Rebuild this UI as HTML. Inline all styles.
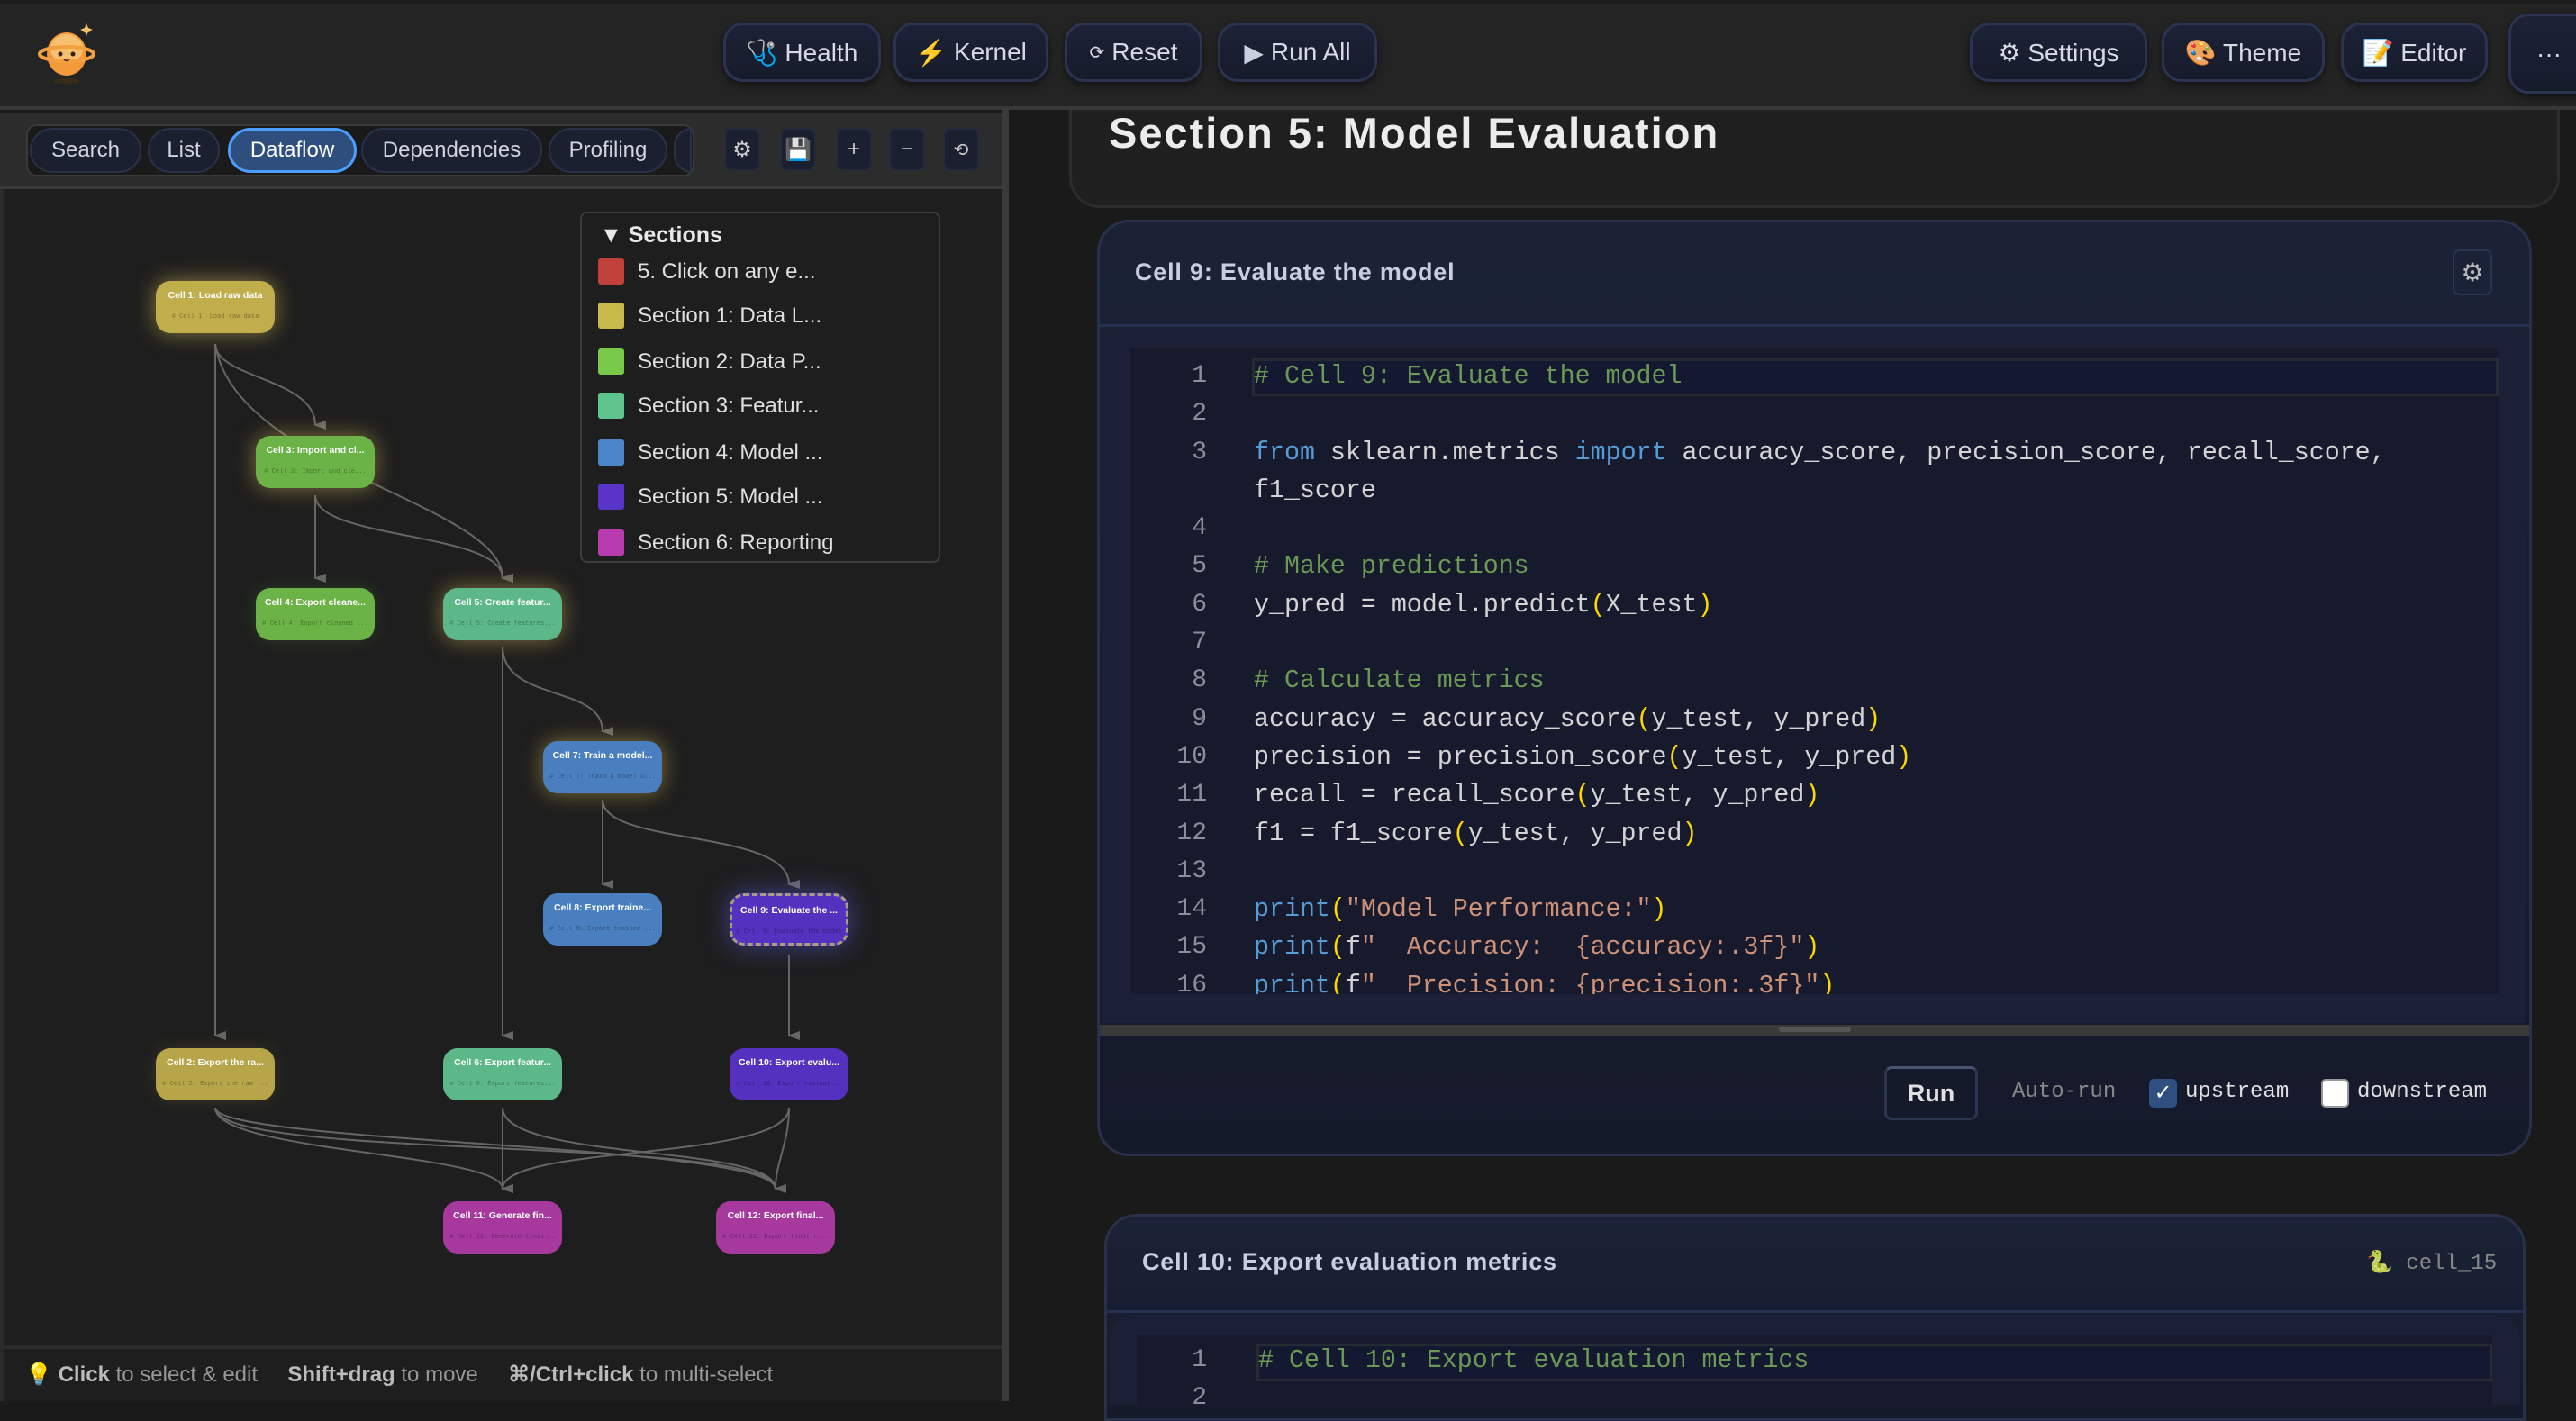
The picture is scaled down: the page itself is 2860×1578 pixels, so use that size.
<!DOCTYPE html>
<html><head><meta charset="utf-8"><style>
*{box-sizing:border-box;margin:0;padding:0}
body{width:2860px;height:1556px;overflow:hidden;background:#1a1a1a;font-family:"Liberation Sans",sans-serif;position:relative;color:#ddd}
.a{position:absolute}
.tb{position:absolute;top:25px;height:66px;background:linear-gradient(#1c2236,#161b2c);border:3px solid #2a3350;border-radius:22px;color:#d6dae6;font-size:28px;display:flex;align-items:center;justify-content:center;gap:8px;box-shadow:0 4px 10px rgba(0,0,0,.5)}
.tab{position:absolute;top:142px;height:50px;background:#1b2030;border:2px solid #2a3248;border-radius:25px;color:#d0d4de;font-size:24px;display:flex;align-items:center;justify-content:center}
.ib{position:absolute;top:142px;width:40px;height:48px;background:#1b2030;border:2px solid #232a3c;border-radius:8px;color:#ccc;font-size:24px;display:flex;align-items:center;justify-content:center}
.leg{position:absolute;left:664px;width:29px;height:29px;border-radius:3px}
.legt{position:absolute;left:708px;font-size:24px;color:#e0e0e0}
.node{position:absolute;width:132px;height:58px;border-radius:16px;text-align:center;color:#fff;font-size:10.5px;font-weight:bold;padding-top:10px}
.node span{display:block;font-family:"Liberation Mono",monospace;font-weight:normal;font-size:7px;color:rgba(0,0,0,.35);margin-top:14px;white-space:nowrap;overflow:hidden}
.code{position:absolute;font-family:"Liberation Mono",monospace;font-size:28.3px;line-height:42.3px;color:#d4d4d4;white-space:pre}
.ln{position:absolute;font-family:"Liberation Mono",monospace;font-size:28px;line-height:42.3px;color:#8a8f9c;text-align:right;width:60px;white-space:pre}
.c{color:#6a9955}.k{color:#569cd6}.p{color:#ffd700}.s{color:#ce9178}
</style></head><body>
<!-- right panel section card (under top bar) -->
<div class="a" style="left:1187px;top:90px;width:1655px;height:141px;background:#1f1f1f;border:3px solid #2c2c2c;border-top:none;border-radius:0 0 34px 34px"></div>
<div class="a" style="left:1231px;top:120px;font-size:47px;font-weight:bold;color:#ececec;letter-spacing:2px">Section 5: Model Evaluation</div>
<!-- top bar -->
<div class="a" style="left:0;top:0;width:2860px;height:122px;background:#242424;border-bottom:4px solid #383838"></div>
<div class="a" style="left:0;top:0;width:2860px;height:4px;background:#1c1c1c"></div>
<svg class="a" style="left:36px;top:18px" width="80" height="80" viewBox="0 0 80 80">
<ellipse cx="38" cy="72" rx="14" ry="3" fill="#3a2a1a"/>
<ellipse cx="38" cy="42" rx="22" ry="24" fill="#f39a3a"/>
<ellipse cx="38" cy="36" rx="18" ry="16" fill="#f7c070"/>
<ellipse cx="38" cy="42" rx="30" ry="8" fill="none" stroke="#f2a040" stroke-width="4"/>
<circle cx="31" cy="42" r="2.5" fill="#3a2010"/><circle cx="45" cy="42" r="2.5" fill="#3a2010"/>
<path d="M35 48 q3 3 6 0" stroke="#3a2010" stroke-width="1.5" fill="none"/>
<path d="M60 8 l2 5 l5 2 l-5 2 l-2 5 l-2 -5 l-5 -2 l5 -2z" fill="#f7c070"/>
</svg>
<div class="tb" style="left:803px;width:175px">🩺 Health</div>
<div class="tb" style="left:992px;width:172px"><span style="color:#f5c542">⚡</span> Kernel</div>
<div class="tb" style="left:1182px;width:153px"><span style="font-size:20px">⟳</span> Reset</div>
<div class="tb" style="left:1352px;width:177px"><span style="color:#c8d0e0">▶</span> Run All</div>
<div class="tb" style="left:2187px;width:197px">⚙ Settings</div>
<div class="tb" style="left:2400px;width:181px">🎨 Theme</div>
<div class="tb" style="left:2599px;width:163px">📝 Editor</div>
<div class="tb" style="left:2785px;top:15px;height:89px;width:90px;border-radius:22px 0 0 22px">···</div>

<!-- left panel -->
<div class="a" style="left:0;top:126px;width:1112px;height:1430px;background:#1e1e1e;border-left:4px solid #2a2a2a"></div>
<div class="a" style="left:0;top:126px;width:1112px;height:84px;background:#2c2c2c;border-bottom:4px solid #3a3a3a"></div>
<div class="a" style="left:1112px;top:122px;width:8px;height:1434px;background:#3a3a3a"></div>
<div class="a" style="left:29px;top:138px;width:742px;height:58px;background:#1a1a1a;border:2px solid #3a3a3a;border-radius:12px"></div>
<div class="tab" style="left:33px;width:124px">Search</div>
<div class="tab" style="left:164px;width:80px">List</div>
<div class="tab" style="left:253px;width:143px;background:#2e4f7e;border:3px solid #4a9eff;color:#fff">Dataflow</div>
<div class="tab" style="left:401px;width:201px">Dependencies</div>
<div class="tab" style="left:609px;width:132px">Profiling</div>
<div class="tab" style="left:748px;width:20px;border-radius:25px 0 0 25px"></div>
<div class="ib" style="left:804px">⚙</div>
<div class="ib" style="left:866px">💾</div>
<div class="ib" style="left:928px">+</div>
<div class="ib" style="left:987px">−</div>
<div class="ib" style="left:1047px;font-size:20px">⟲</div>

<!-- graph edges -->
<svg class="a" style="left:0;top:0" width="1112" height="1556">
<defs><marker id="ar" markerWidth="10" markerHeight="14" refX="5" refY="12" orient="auto-start-reverse" markerUnits="userSpaceOnUse"><path d="M0 0 L10 0 L5 14z" fill="#666"/></marker></defs>
<g stroke="#666" stroke-width="2" fill="none">
<path d="M239 382 C239 420 350 420 350 472" marker-end="url(#ar)"/>
<path d="M239 382 C260 520 558 560 558 642" marker-end="url(#ar)"/>
<path d="M239 382 L239 1150" marker-end="url(#ar)"/>
<path d="M350 550 L350 642" marker-end="url(#ar)"/>
<path d="M350 550 C350 600 558 590 558 642" marker-end="url(#ar)"/>
<path d="M558 718 C558 780 669 760 669 812" marker-end="url(#ar)"/>
<path d="M558 718 L558 1150" marker-end="url(#ar)"/>
<path d="M669 888 L669 982" marker-end="url(#ar)"/>
<path d="M669 888 C669 940 876 920 876 982" marker-end="url(#ar)"/>
<path d="M876 1060 L876 1150" marker-end="url(#ar)"/>
<path d="M239 1230 C239 1280 558 1280 558 1320" marker-end="url(#ar)"/>
<path d="M239 1230 C239 1270 861 1270 861 1320" marker-end="url(#ar)"/>
<path d="M239 1230 C239 1290 861 1260 861 1320" />
<path d="M558 1230 L558 1320" marker-end="url(#ar)"/>
<path d="M558 1230 C558 1290 861 1270 861 1320" />
<path d="M876 1230 C876 1290 558 1270 558 1320" />
<path d="M876 1230 C876 1270 861 1290 861 1320" />
</g></svg>

<!-- nodes -->
<div class="node" style="left:173px;top:312px;background:#c0ae4c;box-shadow:0 0 24px rgba(230,200,90,.55)">Cell 1: Load raw data<span># Cell 1: Load raw data</span></div>
<div class="node" style="left:284px;top:484px;background:#6cb347;box-shadow:0 0 24px rgba(230,200,90,.5)">Cell 3: Import and cl...<span># Cell 3: Import and cle...</span></div>
<div class="node" style="left:284px;top:653px;background:#6cb347;box-shadow:0 0 20px rgba(100,180,70,.2)">Cell 4: Export cleane...<span># Cell 4: Export cleaned ...</span></div>
<div class="node" style="left:492px;top:653px;background:#5cb889;box-shadow:0 0 24px rgba(230,200,90,.5)">Cell 5: Create featur...<span># Cell 5: Create features...</span></div>
<div class="node" style="left:603px;top:823px;background:#4a7fbf;box-shadow:0 0 24px rgba(230,200,90,.5)">Cell 7: Train a model...<span># Cell 7: Train a model u...</span></div>
<div class="node" style="left:603px;top:992px;background:#4a7fbf">Cell 8: Export traine...<span># Cell 8: Export trained ...</span></div>
<div class="node" style="left:810px;top:992px;background:#5531bf;border:3px dashed #a89f80;box-shadow:0 0 30px rgba(100,100,255,.5)">Cell 9: Evaluate the ...<span># Cell 9: Evaluate the model</span></div>
<div class="node" style="left:173px;top:1164px;background:#b6a549;box-shadow:0 0 20px rgba(200,180,70,.15)">Cell 2: Export the ra...<span># Cell 2: Export the raw ...</span></div>
<div class="node" style="left:492px;top:1164px;background:#5cb889">Cell 6: Export featur...<span># Cell 6: Export features...</span></div>
<div class="node" style="left:810px;top:1164px;background:#5531bf">Cell 10: Export evalu...<span># Cell 10: Export evaluat...</span></div>
<div class="node" style="left:492px;top:1334px;background:#a6389e">Cell 11: Generate fin...<span># Cell 11: Generate final...</span></div>
<div class="node" style="left:795px;top:1334px;background:#a6389e">Cell 12: Export final...<span># Cell 12: Export final r...</span></div>

<!-- legend -->
<div class="a" style="left:644px;top:235px;width:400px;height:390px;background:#1e1e1e;border:2px solid #3c3c3c;border-radius:8px"></div>
<div class="a" style="left:666px;top:247px;font-size:25px;font-weight:bold;color:#e8e8e8">▼ Sections</div>
<div class="leg" style="top:287px;background:#c0403a"></div><div class="legt" style="top:288px">5. Click on any e...</div>
<div class="leg" style="top:336px;background:#c9b84a"></div><div class="legt" style="top:337px">Section 1: Data L...</div>
<div class="leg" style="top:387px;background:#78c84a"></div><div class="legt" style="top:388px">Section 2: Data P...</div>
<div class="leg" style="top:436px;background:#5ec58f"></div><div class="legt" style="top:437px">Section 3: Featur...</div>
<div class="leg" style="top:488px;background:#4a86c8"></div><div class="legt" style="top:489px">Section 4: Model ...</div>
<div class="leg" style="top:537px;background:#5a34c8"></div><div class="legt" style="top:538px">Section 5: Model ...</div>
<div class="leg" style="top:588px;background:#b83cb0"></div><div class="legt" style="top:589px">Section 6: Reporting</div>

<!-- footer -->
<div class="a" style="left:4px;top:1494px;width:1108px;height:4px;background:#2c2c2c"></div>
<div class="a" style="left:28px;top:1512px;font-size:24px;color:#999;white-space:pre">💡 <b style="color:#bbb">Click</b> to select &amp; edit     <b style="color:#bbb">Shift+drag</b> to move     <b style="color:#bbb">⌘/Ctrl+click</b> to multi-select</div>

<div class="a" style="left:1218px;top:244px;width:1593px;height:1040px;background:linear-gradient(#1b2236,#151a2b);border:3px solid #29314a;border-radius:36px"></div>
<div class="a" style="left:1260px;top:287px;font-size:27px;font-weight:bold;color:#c8cde0;letter-spacing:.8px">Cell 9: Evaluate the model</div>
<div class="a" style="left:2723px;top:277px;width:44px;height:51px;border:2px solid #2c3550;border-radius:8px;color:#bbb;font-size:28px;display:flex;align-items:center;justify-content:center">⚙</div>
<div class="a" style="left:1221px;top:360px;width:1587px;height:3px;background:#263050"></div>
<div class="a" style="left:1224px;top:366px;width:1580px;height:770px;background:#1b2036;border-radius:30px 30px 0 0"></div>
<div class="a" style="left:1255px;top:387px;width:1520px;height:717px;background:#161a2c"></div>
<div class="a" style="left:1390px;top:398px;width:1384px;height:42px;border:3px solid #262a33;background:#141830"></div>
<div class="ln" style="left:1280px;top:397px">1
2
3

4
5
6
7
8
9
10
11
12
13
14
15
16</div>
<div class="code" style="left:1392px;top:397px;height:707px;overflow:hidden"><span class="c"># Cell 9: Evaluate the model</span>

<span class="k">from</span> sklearn.metrics <span class="k">import</span> accuracy_score, precision_score, recall_score,
f1_score

<span class="c"># Make predictions</span>
y_pred = model.predict<span class="p">(</span>X_test<span class="p">)</span>

<span class="c"># Calculate metrics</span>
accuracy = accuracy_score<span class="p">(</span>y_test, y_pred<span class="p">)</span>
precision = precision_score<span class="p">(</span>y_test, y_pred<span class="p">)</span>
recall = recall_score<span class="p">(</span>y_test, y_pred<span class="p">)</span>
f1 = f1_score<span class="p">(</span>y_test, y_pred<span class="p">)</span>

<span class="k">print</span><span class="p">(</span><span class="s">"Model Performance:"</span><span class="p">)</span>
<span class="k">print</span><span class="p">(</span>f<span class="s">"  Accuracy:  {accuracy:.3f}"</span><span class="p">)</span>
<span class="k">print</span><span class="p">(</span>f<span class="s">"  Precision: {precision:.3f}"</span><span class="p">)</span></div>
<div class="a" style="left:1221px;top:1138px;width:1587px;height:12px;background:#3a3a3a"></div>
<div class="a" style="left:1975px;top:1140px;width:80px;height:6px;background:#555;border-radius:3px"></div>
<div class="a" style="left:2092px;top:1184px;width:104px;height:60px;background:#151a2b;border:3px solid #2c3550;border-top-color:#4a5470;border-radius:8px;color:#e0e0e0;font-size:27px;font-weight:bold;display:flex;align-items:center;justify-content:center">Run</div>
<div class="a" style="left:2234px;top:1199px;font-family:'Liberation Mono',monospace;font-size:24px;color:#888">Auto-run</div>
<div class="a" style="left:2386px;top:1198px;width:31px;height:32px;background:#2e4f80;border-radius:5px;color:#fff;font-size:24px;text-align:center;line-height:32px">✓</div>
<div class="a" style="left:2426px;top:1199px;font-family:'Liberation Mono',monospace;font-size:24px;color:#e0e0e0">upstream</div>
<div class="a" style="left:2577px;top:1198px;width:31px;height:32px;background:#fff;border:2px solid #999;border-radius:5px"></div>
<div class="a" style="left:2617px;top:1199px;font-family:'Liberation Mono',monospace;font-size:24px;color:#e0e0e0">downstream</div>

<div class="a" style="left:1226px;top:1348px;width:1578px;height:230px;background:linear-gradient(#1b2236,#151a2b);border:3px solid #29314a;border-radius:36px 36px 0 0"></div>
<div class="a" style="left:1268px;top:1386px;font-size:27px;font-weight:bold;color:#c8cde0;letter-spacing:.8px">Cell 10: Export evaluation metrics</div>
<div class="a" style="left:2627px;top:1387px;font-family:'Liberation Mono',monospace;font-size:24px;color:#888">🐍 cell_15</div>
<div class="a" style="left:1229px;top:1455px;width:1572px;height:3px;background:#263050"></div>
<div class="a" style="left:1232px;top:1460px;width:1566px;height:100px;background:#1b2036;border-radius:30px 30px 0 0"></div>
<div class="a" style="left:1262px;top:1482px;width:1505px;height:80px;background:#161a2c"></div>
<div class="a" style="left:1395px;top:1492px;width:1372px;height:42px;border:3px solid #262a33;background:#141830"></div>
<div class="ln" style="left:1280px;top:1490px">1
2</div>
<div class="code" style="left:1397px;top:1490px"><span class="c"># Cell 10: Export evaluation metrics</span></div>
</body></html>
